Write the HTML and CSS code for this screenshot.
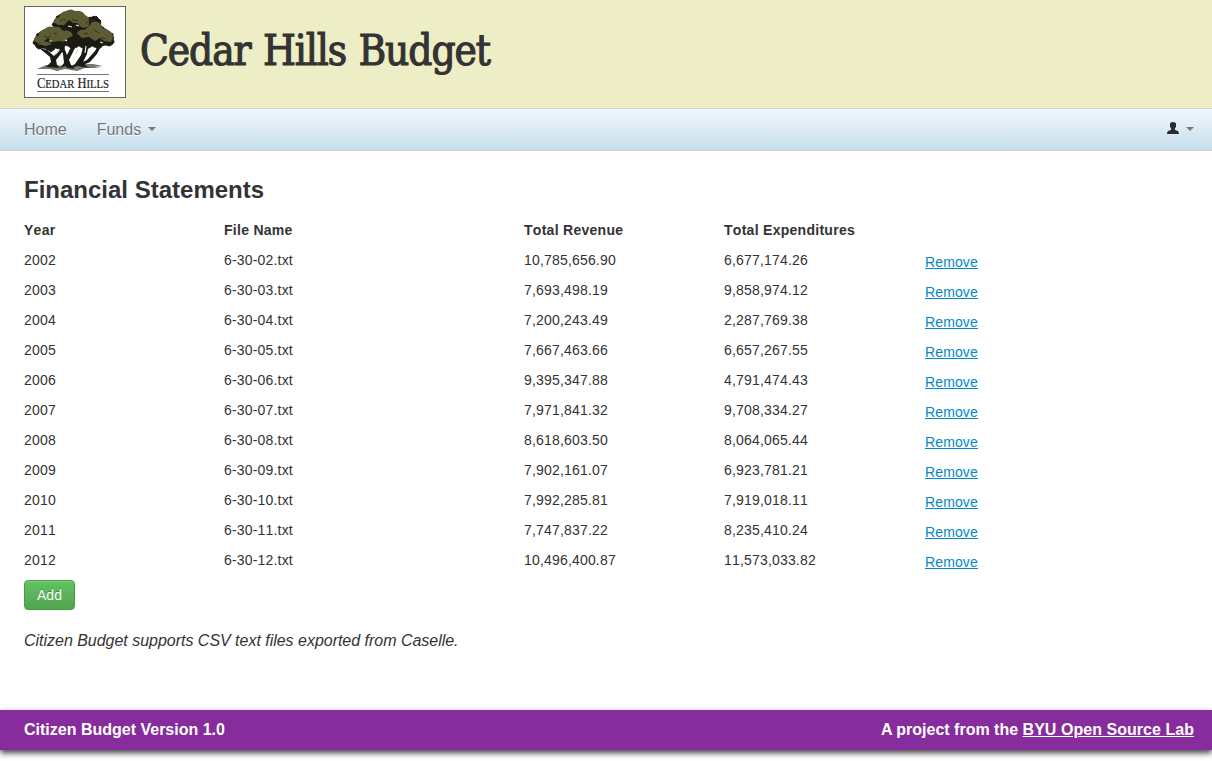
FILE: index.html
```
<!DOCTYPE html>
<html lang="en">
<head>
<meta charset="utf-8">
<title>Cedar Hills Budget</title>
<link rel="stylesheet" href="styles.css">
</head>
<body>
<header class="banner">
  <svg class="logo" viewBox="0 0 100 90" role="img" aria-label="Cedar Hills">
    <path class="shadow" d="M12 62L21 58 30 58 40 59 54 57 68 57 78 59 69 60 76 61 60 61 52 64 40 62 32 64 25 62z"/>
    <g class="wood">
      <path d="M21 60l5-5-1-5-6-5-5-4 8 2 7 6 5-5 3-5 3 2-5 7-4 5 1 5 3 3z"/>
      <path d="M35 61l4-5-1-9-4-11 4 2 4 10 3-6 4-7 3 1-4 9-4 8 2 5 4 4-7-1-3-2z"/>
      <path d="M45 61l5-4 6-9 3-12 5-1-2 12-4 8 3 4 4 2-8-1-4-1z"/>
      <path d="M53 57l9-4 8-9 4-7 3 0-5 10-7 8-7 3z"/>
    </g>
    <g class="under">
      <path d="M8 36L12 27 22 21 34 20 46 28 60 24 76 19 88 27 89 36 85 39 79 38 74 42 67 39 61 43 54 39 48 42 41 38 37 43 31 41 26 45 19 41 13 42z"/>
      <path d="M27 18L32 9 41 5 52 5 62 11 71 9 76 14 75 21 65 27 49 31 38 29z"/>
    </g>
    <g class="leaves">
      <path d="M9 34q0-5 5-5-1-5 5-6 4-5 10-3 6-1 8 3 5 1 4 6l2 3q-3 4-8 2l-8 1-4-4-5 4-5 1z"/>
      <path d="M29 16q0-5 5-6 1-5 7-6 5-3 9 0 7-1 10 4 5 2 4 7l0 4q-4 3-8 1l-4-4-4 0-4-3-5 5-6 0-3-2z"/>
      <path d="M52 27q2-5 7-4l4-3 4-5q7-2 10 4l0 2 3 1q8 2 8 9l-2 4-7-1-4-3-5 3-6-4-7 1-3-3z"/>
      <path d="M12 37l6-3 5 1 4 2-6 2zM37 26l4-3 5 2 2 4-5 2-5-1z"/>
    </g>
    <path class="shade" d="M19 29l4 2 3-3M35 14l4-2 2 2M47 12l3 2 3-1M69 23l5 3M59 27l4-1M76 31l4 0M29 26l3 1M61 16l4-3 5 1M63 19l3-2"/>
    <path class="glint" d="M43 19l4 1M51 18l3 1M24 34l3 0M75 35l3 1M40 33l2 1M53 42l-2 5M61 39l-1 7M34 43l-3 4"/>
    <path class="rule" d="M12 67.5h72M12 84.5h72"/>
    <text class="logo-name" x="12" y="81" textLength="72" lengthAdjust="spacingAndGlyphs">C<tspan class="small">EDAR</tspan> H<tspan class="small">ILLS</tspan></text>
  </svg>
  <h1 class="site-title">Cedar Hills Budget</h1>
</header>
<nav class="navbar">
  <a class="nav-link">Home</a>
  <a class="nav-link">Funds <span class="caret"></span></a>
  <a class="user-menu">
    <svg class="user-icon" viewBox="0 0 12 12"><path d="M3 1.5Q3.3 0 6 0t3 1.5v3.2L7.8 6.8v1l3 1.2Q12 9.5 12 12H0Q0 9.5 1.2 9l3-1.2v-1L3 4.7z"/></svg>
    <span class="caret"></span>
  </a>
</nav>
<main class="content">
  <h2 class="heading">Financial Statements</h2>
  <div class="statements">
    <div class="row head"><span>Year</span><span>File Name</span><span>Total Revenue</span><span>Total Expenditures</span></div>
    <div class="row"><span>2002</span><span>6-30-02.txt</span><span>10,785,656.90</span><span>6,677,174.26</span><a class="remove">Remove</a></div>
    <div class="row"><span>2003</span><span>6-30-03.txt</span><span>7,693,498.19</span><span>9,858,974.12</span><a class="remove">Remove</a></div>
    <div class="row"><span>2004</span><span>6-30-04.txt</span><span>7,200,243.49</span><span>2,287,769.38</span><a class="remove">Remove</a></div>
    <div class="row"><span>2005</span><span>6-30-05.txt</span><span>7,667,463.66</span><span>6,657,267.55</span><a class="remove">Remove</a></div>
    <div class="row"><span>2006</span><span>6-30-06.txt</span><span>9,395,347.88</span><span>4,791,474.43</span><a class="remove">Remove</a></div>
    <div class="row"><span>2007</span><span>6-30-07.txt</span><span>7,971,841.32</span><span>9,708,334.27</span><a class="remove">Remove</a></div>
    <div class="row"><span>2008</span><span>6-30-08.txt</span><span>8,618,603.50</span><span>8,064,065.44</span><a class="remove">Remove</a></div>
    <div class="row"><span>2009</span><span>6-30-09.txt</span><span>7,902,161.07</span><span>6,923,781.21</span><a class="remove">Remove</a></div>
    <div class="row"><span>2010</span><span>6-30-10.txt</span><span>7,992,285.81</span><span>7,919,018.11</span><a class="remove">Remove</a></div>
    <div class="row"><span>2011</span><span>6-30-11.txt</span><span>7,747,837.22</span><span>8,235,410.24</span><a class="remove">Remove</a></div>
    <div class="row"><span>2012</span><span>6-30-12.txt</span><span>10,496,400.87</span><span>11,573,033.82</span><a class="remove">Remove</a></div>
  </div>
  <button class="add">Add</button>
  <p class="note">Citizen Budget supports CSV text files exported from Caselle.</p>
</main>
<footer class="footer">
  <span>Citizen Budget Version 1.0</span>
  <span>A project from the <a class="lab">BYU Open Source Lab</a></span>
</footer>
</body>
</html>
```
FILE: styles.css
```
* { box-sizing: border-box; }
body {
  margin: 0;
  height: 761px;
  overflow: hidden;
  background: #fff;
  color: #333;
  font: 14px/20px "Liberation Sans", Arial, sans-serif;
}
.banner {
  display: flex;
  height: 108px;
  padding: 6px 24px 0;
  background: #eeeec6;
}
.logo {
  width: 102px;
  height: 92px;
  border: 1px solid #666;
  background: #fff;
}
.shadow { fill: #77776f; }
.wood { fill: #1b1a16; }
.under { fill: #1c1b12; stroke: #1c1b12; stroke-width: 1; stroke-dasharray: 3 1; }
.leaves { fill: #5d5b32; }
.shade { fill: none; stroke: #33321a; stroke-width: 1; }
.glint { fill: none; stroke: #e6e6dc; stroke-width: 1.2; }
.rule { stroke: #777; stroke-width: 1; }
.logo-name { font: 14.5px "Liberation Serif", serif; fill: #222; stroke: #222; stroke-width: .2; }
.small { font-size: 12.5px; }
.site-title {
  margin: 17px 0 0 14px;
  font: 400 42px/56px "DejaVu Serif Condensed", "DejaVu Serif", serif;
  font-stretch: condensed;
  letter-spacing: -1.1px;
  word-spacing: 1.5px;
  -webkit-text-stroke: 1.1px #333;
  white-space: nowrap;
}
.navbar {
  display: flex;
  align-items: center;
  gap: 30px;
  height: 43px;
  padding: 0 18px 0 24px;
  border: solid #d4d4d4;
  border-width: 1px 0;
  background: linear-gradient(#f0f7fd, #c5deec);
  color: #777;
  font-size: 16px;
  text-shadow: 0 1px 0 #fff;
}
.nav-link, .user-menu { display: flex; align-items: center; }
.caret {
  margin: -2px 0 0 7px;
  border: 4px solid transparent;
  border-top-color: #777;
  border-bottom: 0;
}
.user-menu { margin-left: auto; }
.user-icon { width: 12px; height: 12px; margin-top: -4px; fill: #2b2b2b; }
.content { height: 559px; padding: 19px 24px 0; }
.heading { margin: 0 0 8px; font-size: 24px; line-height: 40px; }
.row {
  display: grid;
  grid-template-columns: 200px 300px 200px 201px 100px;
  height: 30px;
  font-kerning: none;
  letter-spacing: .18px;
}
.row > span, .remove { line-height: 24px; }
.head { font-weight: bold; letter-spacing: .28px; }
.remove { padding-top: 2px; color: #0088cc; text-decoration: underline; letter-spacing: .13px; }
.add {
  display: block;
  width: 51px;
  height: 30px;
  margin-top: 2px;
  padding: 0;
  border: 1px solid #4a9a4a;
  border-radius: 4px;
  background: linear-gradient(#62c462, #51a351);
  box-shadow: inset 0 1px 0 rgba(255,255,255,.2), 0 1px 2px rgba(0,0,0,.05);
  color: #fff;
  font: 14px/20px "Liberation Sans", Arial, sans-serif;
  text-shadow: 0 -1px 0 rgba(0,0,0,.25);
}
.note { margin: 21px 0 0; font-size: 16px; font-style: italic; letter-spacing: -.02px; }
.footer {
  display: flex;
  justify-content: space-between;
  align-items: center;
  height: 40px;
  padding: 0 18px 0 24px;
  background: #862c9c;
  box-shadow: 0 3px 6px rgba(0,0,0,.75);
  color: #fff;
  font-size: 16px;
  font-weight: bold;
}
.lab { text-decoration: underline; letter-spacing: .04px; }
```
